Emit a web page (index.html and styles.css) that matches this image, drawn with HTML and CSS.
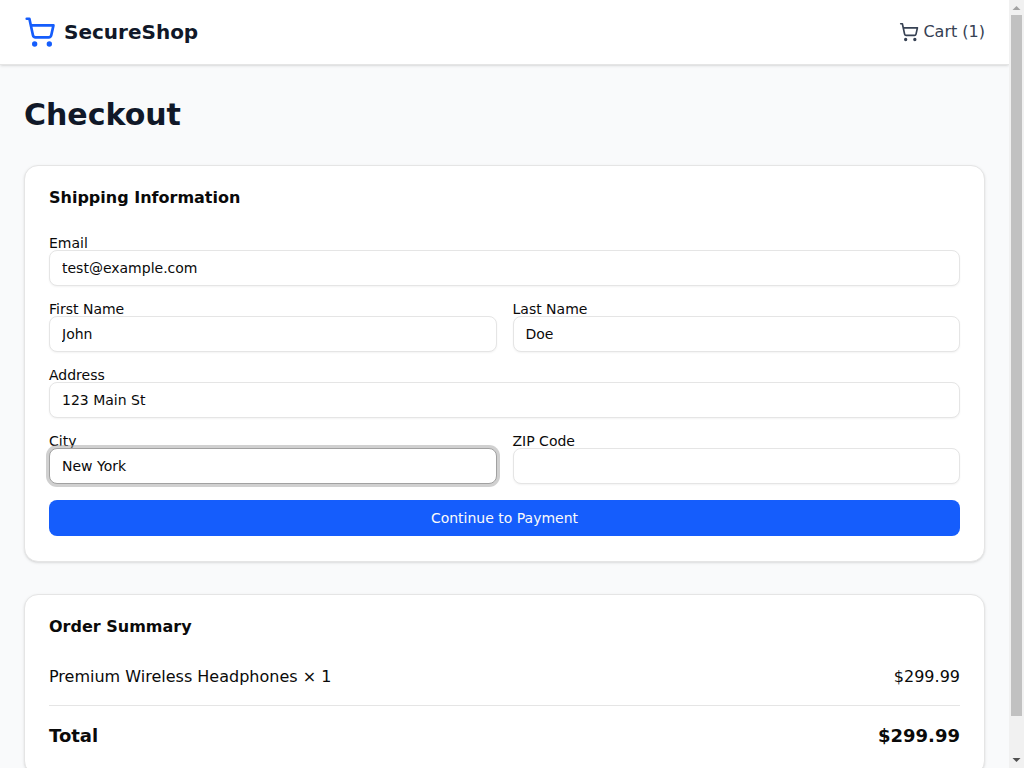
FILE: index.html
```html
<!DOCTYPE html>
<html lang="en">
<head>
<meta charset="utf-8">
<meta name="viewport" content="width=device-width, initial-scale=1">
<title>Checkout - SecureShop</title>
<link rel="stylesheet" href="styles.css">
</head>
<body>
<header class="site-header">
  <a class="brand" href="#">
    <svg class="brand-icon" viewBox="0 0 24 24" aria-hidden="true"><circle cx="8" cy="21" r="1"/><circle cx="19" cy="21" r="1"/><path d="M2.05 2.05h2l2.66 12.42a2 2 0 0 0 2 1.58h9.78a2 2 0 0 0 1.95-1.57l1.65-7.43H5.12"/></svg>
    <span>SecureShop</span>
  </a>
  <a class="cart" href="#">
    <svg class="cart-icon" viewBox="0 0 24 24" aria-hidden="true"><circle cx="8" cy="21" r="1"/><circle cx="19" cy="21" r="1"/><path d="M2.05 2.05h2l2.66 12.42a2 2 0 0 0 2 1.58h9.78a2 2 0 0 0 1.95-1.57l1.65-7.43H5.12"/></svg>
    <span>Cart (1)</span>
  </a>
</header>
<main class="main">
  <h1 class="page-title">Checkout</h1>
  <section class="card">
    <h2 class="card-title">Shipping Information</h2>
    <form class="form">
      <div class="field">
        <label class="label" for="email">Email</label>
        <input class="input" id="email" type="email" value="test@example.com">
      </div>
      <div class="field-row">
        <div class="field">
          <label class="label" for="first-name">First Name</label>
          <input class="input" id="first-name" type="text" value="John">
        </div>
        <div class="field">
          <label class="label" for="last-name">Last Name</label>
          <input class="input" id="last-name" type="text" value="Doe">
        </div>
      </div>
      <div class="field">
        <label class="label" for="address">Address</label>
        <input class="input" id="address" type="text" value="123 Main St">
      </div>
      <div class="field-row">
        <div class="field">
          <label class="label" for="city">City</label>
          <input class="input input-active" id="city" type="text" value="New York">
        </div>
        <div class="field">
          <label class="label" for="zip">ZIP Code</label>
          <input class="input" id="zip" type="text">
        </div>
      </div>
      <button class="button" type="submit">Continue to Payment</button>
    </form>
  </section>
  <section class="card">
    <h2 class="card-title">Order Summary</h2>
    <div class="item"><span>Premium Wireless Headphones × 1</span><span>$299.99</span></div>
    <div class="total"><span>Total</span><span>$299.99</span></div>
  </section>
</main>
<div class="scrollbar" aria-hidden="true">
  <svg class="scroll-arrow" viewBox="0 0 15 15"><path d="M3.5 10 7.5 6l4 4z" fill="#a3a3a3"/></svg>
  <div class="scroll-track"><div class="scroll-thumb"></div></div>
  <svg class="scroll-arrow" viewBox="0 0 15 15"><path d="M3.5 5h8l-4 4z" fill="#505050"/></svg>
</div>
</body>
</html>
```
FILE: styles.css
```css
*, *::before, *::after { box-sizing: border-box; }
html { scrollbar-width: none; }
body {
  margin: 0;
  padding-right: 15px;
  background: #f9fafb;
  color: #0a0a0a;
  font-family: "DejaVu Sans", sans-serif;
  font-size: 16px;
  line-height: 24px;
}
h1, h2 { margin: 0; }
a { color: inherit; text-decoration: none; }
.site-header {
  display: flex;
  align-items: center;
  justify-content: space-between;
  padding: 16px 24px;
  background: #fff;
  border-bottom: 1px solid #e5e5e5;
  box-shadow: 0 1px 3px rgba(0, 0, 0, 0.1), 0 1px 2px -1px rgba(0, 0, 0, 0.1);
}
.brand {
  display: flex;
  align-items: center;
  gap: 8px;
  color: #101828;
  font-size: 20px;
  font-weight: 700;
  line-height: 28px;
}
.brand-icon, .cart-icon {
  fill: none;
  stroke: currentColor;
  stroke-width: 2;
  stroke-linecap: round;
  stroke-linejoin: round;
}
.brand-icon { width: 32px; height: 32px; color: #155dfc; }
.cart { display: flex; align-items: center; gap: 4px; color: #364153; }
.cart-icon { width: 20px; height: 20px; }
.main {
  display: flex;
  flex-direction: column;
  gap: 32px;
  padding: 32px 24px;
}
.page-title {
  color: #101828;
  font-size: 30px;
  font-weight: 700;
  line-height: 36px;
}
.card {
  padding: 24px;
  background: #fff;
  border: 1px solid #e5e5e5;
  border-radius: 14px;
  box-shadow: 0 1px 3px rgba(0, 0, 0, 0.1), 0 1px 2px -1px rgba(0, 0, 0, 0.1);
}
.card-title {
  margin-bottom: 30px;
  font-size: 16px;
  font-weight: 600;
  line-height: 16px;
}
.form {
  display: flex;
  flex-direction: column;
  gap: 16px;
  padding-bottom: 1px;
}
.field { display: flex; flex-direction: column; min-width: 0; }
.field-row { display: grid; grid-template-columns: 1fr 1fr; gap: 16px; }
.label { font-size: 14px; line-height: 14px; }
.input {
  width: 100%;
  height: 36px;
  padding: 4px 12px;
  background: #fff;
  color: inherit;
  border: 1px solid #e5e5e5;
  border-radius: 8px;
  outline: none;
  box-shadow: 0 1px 2px rgba(0, 0, 0, 0.05);
  font-family: inherit;
  font-size: 14px;
  line-height: 20px;
}
.input:focus, .input-active {
  border-color: #a1a1a1;
  box-shadow: 0 0 0 3px rgba(161, 161, 161, 0.5);
}
.button {
  height: 36px;
  padding: 8px 16px;
  background: #155dfc;
  color: #fafafa;
  border: 0;
  border-radius: 8px;
  font-family: inherit;
  font-size: 14px;
  line-height: 20px;
  cursor: pointer;
}
.item, .total { display: flex; justify-content: space-between; gap: 16px; }
.item { padding-bottom: 16px; }
.total {
  padding-top: 16px;
  border-top: 1px solid #e5e5e5;
  font-size: 18px;
  font-weight: 700;
  line-height: 28px;
}
.scrollbar {
  position: fixed;
  top: 0;
  right: 0;
  bottom: 0;
  display: flex;
  flex-direction: column;
  width: 15px;
  background: #f1f1f1;
}
.scroll-arrow { display: block; width: 15px; height: 15px; }
.scroll-track { flex: 1; padding: 0 2px; }
.scroll-thumb { height: 95%; background: #c1c1c1; }
```
